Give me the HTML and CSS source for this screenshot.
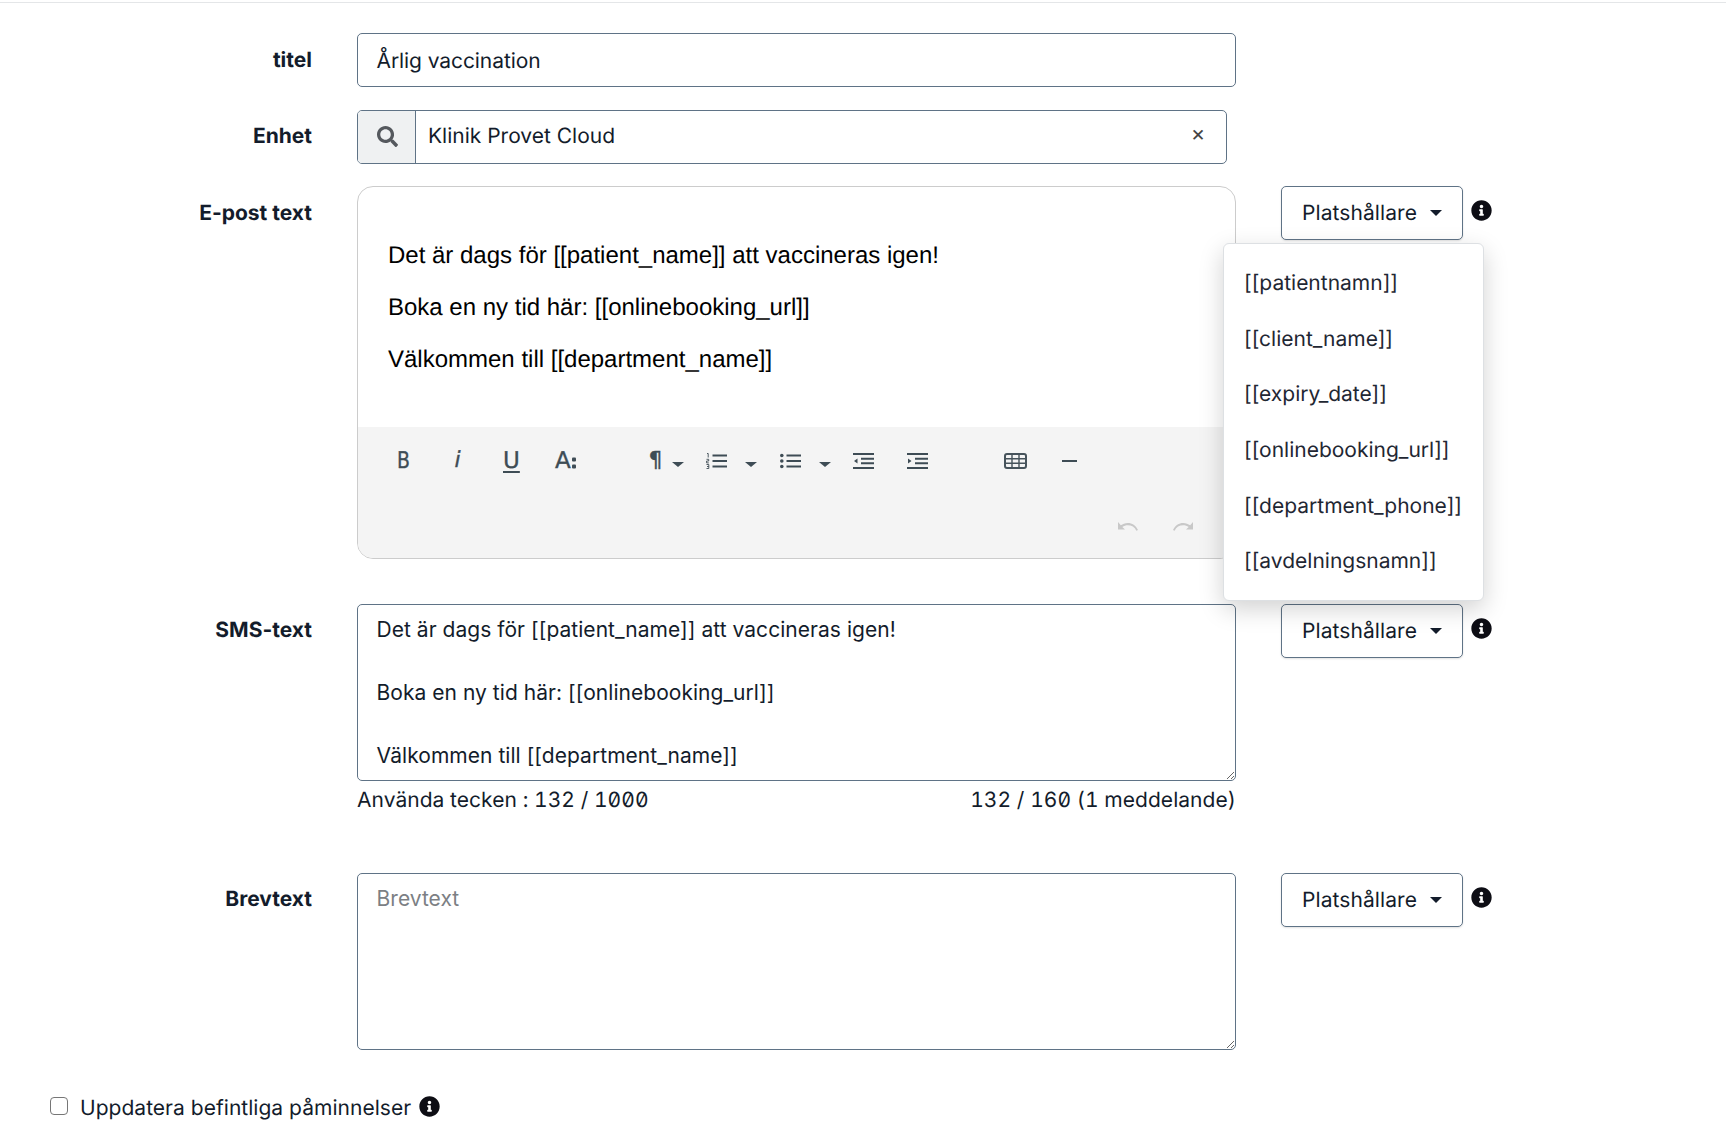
FILE: index.html
```html
<!DOCTYPE html>
<html lang="sv">
<head>
<meta charset="utf-8">
<title>Påminnelse</title>
<link rel="stylesheet" href="styles.css">
</head>
<body>
<svg class="defs" width="0" height="0" aria-hidden="true">
  <symbol id="info" viewBox="0 0 512 512"><path d="M256 8C119.043 8 8 119.083 8 256c0 136.997 111.043 248 248 248s248-111.003 248-248C504 119.083 392.957 8 256 8zm0 110c23.196 0 42 18.804 42 42s-18.804 42-42 42-42-18.804-42-42 18.804-42 42-42zm56 254c0 6.627-5.373 12-12 12h-88c-6.627 0-12-5.373-12-12v-24c0-6.627 5.373-12 12-12h12v-64h-12c-6.627 0-12-5.373-12-12v-24c0-6.627 5.373-12 12-12h64c6.627 0 12 5.373 12 12v100h12c6.627 0 12 5.373 12 12v24z"/></symbol>
  <symbol id="undo" viewBox="0 0 20 9"><path d="M0 0v7.500h7L4.300 5C6 3.900 7.800 3.300 9.800 3.300c3.700 0 6.900 1.800 8.600 5.500L20 8C17.900 3.300 14.100 .9 9.800 .9 7 .9 4.800 1.800 2.800 3.300z"/></symbol>
</svg>
<main class="form">
  <div class="row row-title">
    <label class="label">titel</label>
    <div class="main-col"><div class="control">Årlig vaccination</div></div>
  </div>
  <div class="row row-unit">
    <label class="label">Enhet</label>
    <div class="main-col">
      <div class="select">
        <span class="addon"><svg class="search" viewBox="0 0 512 512"><path d="M505 442.7L405.3 343c-4.500-4.500-10.600-7-17-7H372c27.600-35.300 44-79.700 44-128C416 93.100 322.900 0 208 0S0 93.100 0 208s93.100 208 208 208c48.300 0 92.700-16.400 128-44v16.300c0 6.400 2.500 12.500 7 17l99.700 99.700c9.400 9.400 24.600 9.400 33.900 0l28.300-28.300c9.400-9.400 9.400-24.600.1-34zM208 336c-70.700 0-128-57.200-128-128 0-70.700 57.200-128 128-128 70.700 0 128 57.200 128 128 0 70.700-57.200 128-128 128z"/></svg></span>
        <span class="select-value">Klinik Provet Cloud</span>
        <span class="clear">×</span>
      </div>
    </div>
  </div>
  <div class="row row-email">
    <label class="label">E-post text</label>
    <div class="main-col">
      <div class="editor">
        <div class="editor-body">
          <p>Det är dags för [[patient_name]] att vaccineras igen!</p>
          <p>Boka en ny tid här: [[onlinebooking_url]]</p>
          <p>Välkommen till [[department_name]]</p>
        </div>
        <div class="toolbar">
          <div class="tools">
            <span class="tool t-b"><span class="glyph">B</span></span>
            <span class="tool t-i">i</span>
            <span class="tool t-u">U</span>
            <span class="tool t-a">A<svg class="dots" viewBox="0 0 4 14"><rect x="0" y="1.500" width="4" height="4" rx="1"/><rect x="0" y="8.500" width="4" height="4" rx="1"/></svg></span>
            <span class="tool t-p">¶<i class="mini-caret"></i></span>
            <span class="tool t-ol">
              <svg class="ti" viewBox="0 0 21 16"><path class="s" d="M6.500 2.500H21M6.500 8H21M6.500 13.500H21"/><path class="n" d="M1 .5h1.200v4M.5 6.300h2.200v1.700H.6v1.900h2.200M.5 11.500h2.300v4H.5M1 13.500h1.800"/></svg><i class="mini-caret wide"></i>
            </span>
            <span class="tool t-ul">
              <svg class="ti" viewBox="0 0 21 16"><path class="s" d="M6.500 2.500H21M6.500 8H21M6.500 13.500H21"/><circle cx="1.800" cy="2.500" r="1.800"/><circle cx="1.800" cy="8" r="1.800"/><circle cx="1.800" cy="13.500" r="1.800"/></svg><i class="mini-caret wide"></i>
            </span>
            <span class="tool t-out"><svg class="ti" viewBox="0 0 21 16"><path class="s" d="M0 1h21M8 5.800h13M8 10.200h13M0 15h21"/><path d="M4.500 5.500v5L1 8z"/></svg></span>
            <span class="tool t-in"><svg class="ti" viewBox="0 0 21 16"><path class="s" d="M0 1h21M8 5.800h13M8 10.200h13M0 15h21"/><path d="M1 5.500v5L4.500 8z"/></svg></span>
            <span class="tool t-table"><svg class="table-ic" viewBox="0 0 23 16"><rect class="t" x="1" y="1" width="21" height="14" rx="2"/><path class="g" d="M1 5.700h21M1 10.300h21M8 1v14M15 1v14"/></svg></span>
            <span class="tool t-hr"><svg class="hr" viewBox="0 0 15 2"><rect width="15" height="2"/></svg></span>
          </div>
          <div class="history">
            <svg class="hist"><use href="#undo"/></svg>
            <svg class="hist flip"><use href="#undo"/></svg>
          </div>
        </div>
      </div>
    </div>
    <div class="side">
      <div class="btn"><span class="btn-text">Platshållare</span><i class="caret"></i></div>
      <svg class="info"><use href="#info"/></svg>
      <ul class="menu">
        <li>[[patientnamn]]</li>
        <li>[[client_name]]</li>
        <li>[[expiry_date]]</li>
        <li>[[onlinebooking_url]]</li>
        <li>[[department_phone]]</li>
        <li>[[avdelningsnamn]]</li>
      </ul>
    </div>
  </div>
  <div class="row row-sms">
    <label class="label">SMS-text</label>
    <div class="main-col">
      <textarea class="area" rows="5" readonly>Det är dags för [[patient_name]] att vaccineras igen!

Boka en ny tid här: [[onlinebooking_url]]

Välkommen till [[department_name]]</textarea>
      <div class="counter"><span>Använda tecken : 132 / 1000</span><span>132 / 160 (1 meddelande)</span></div>
    </div>
    <div class="side">
      <div class="btn"><span class="btn-text">Platshållare</span><i class="caret"></i></div>
      <svg class="info"><use href="#info"/></svg>
    </div>
  </div>
  <div class="row row-letter">
    <label class="label">Brevtext</label>
    <div class="main-col">
      <textarea class="area" rows="5" readonly placeholder="Brevtext"></textarea>
    </div>
    <div class="side">
      <div class="btn"><span class="btn-text">Platshållare</span><i class="caret"></i></div>
      <svg class="info"><use href="#info"/></svg>
    </div>
  </div>
  <div class="check-row">
    <span class="check"></span>
    <span class="check-label">Uppdatera befintliga påminnelser</span>
    <svg class="info small"><use href="#info"/></svg>
  </div>
</main>
</body>
</html>
```
FILE: styles.css
```css
* { box-sizing: border-box; }
html, body { margin: 0; padding: 0; background: #fff; }
body {
  font-family: Inter, "Liberation Sans", sans-serif;
  font-size: 21px;
  line-height: 31.5px;
  color: #131c2b;
  height: 1144px;
  overflow: hidden;
  text-rendering: geometricPrecision;
}
.defs { position: absolute; }
.form { border-top: 1px solid #e4e6e8; margin-top: 2px; padding-top: 30px; }
.row {
  display: grid;
  grid-template-columns: 312px 879px auto;
  column-gap: 45px;
  align-items: start;
}
.row-unit { margin-top: 23px; }
.row-email { margin-top: 22px; }
.row-sms { margin-top: 45px; }
.row-letter { margin-top: 0; }
.label {
  font-weight: 700;
  text-align: right;
  padding-top: 11px;
  color: #131c2b;
}
.row-title .label, .row-email .label { padding-top: 12px; }
.main-col { min-width: 0; }
.control {
  height: 54px;
  border: 1px solid #5f7386;
  border-radius: 5px;
  padding: 12px 18.5px;
  letter-spacing: -.08px;
}
.select {
  display: flex;
  align-items: center;
  width: 870px;
  height: 54px;
  border: 1px solid #5f7386;
  border-radius: 5px;
  overflow: hidden;
}
.addon {
  display: flex;
  align-items: center;
  justify-content: center;
  width: 58px;
  height: 100%;
  flex: none;
  background: #eff1f2;
  border-right: 1px solid #5f7386;
  padding: 0 0 2px 2px;
}
.search { width: 21px; height: 21px; fill: #55595e; }
.select-value { flex: 1; padding-left: 12px; }
.clear { width: 60px; text-align: center; color: #444; font-size: 22px; padding: 0 0 5px 4px; }
.editor {
  height: 373px;
  border: 1px solid #cccccc;
  border-radius: 16px;
  overflow: hidden;
  display: flex;
  flex-direction: column;
}
.editor-body {
  height: 240px;
  padding: 53px 30px 0;
  font-family: "Liberation Sans", Arial, sans-serif;
  font-size: 24px;
  line-height: 32px;
  color: #000;
}
.editor-body p { margin: 0 0 20px; }
.toolbar {
  flex: 1;
  background: #f4f4f4;
  padding: 19px 0 0 39px;
  display: flex;
  flex-direction: column;
  color: #3e4c55;
}
.tools { display: flex; align-items: center; height: 30px; }
.tool {
  display: inline-flex;
  align-items: center;
  font-family: "DejaVu Sans", sans-serif;
  font-size: 23px;
  color: #3e4c55;
  line-height: 1;
  flex: none;
  -webkit-text-stroke: .35px #3e4c55;
}
.glyph { display: inline-block; transform: scaleX(.82); transform-origin: left center; }
.t-b { width: 57.5px; }
.t-i { width: 48.5px; font-style: italic; font-size: 22px; }
.t-u { width: 52px; text-decoration: underline; text-underline-offset: 3px; text-decoration-thickness: 2px; }
.t-a { width: 93.5px; }
.dots { width: 4px; height: 14px; fill: #3e4c55; margin-left: 1px; margin-top: 3px; }
.t-p { width: 57px; font-size: 22px; }
.t-ol { width: 74.5px; }
.t-ul { width: 72.5px; }
.t-out { width: 54px; }
.t-in { width: 97.5px; }
.t-table { width: 58px; }
.ti { width: 21px; height: 16px; fill: #3e4c55; display: block; flex: none; }
.table-ic { width: 23px; height: 16px; display: block; }
.s { fill: none; stroke: #3e4c55; stroke-width: 2; }
.n { fill: none; stroke: #3e4c55; stroke-width: .9; }
.t { fill: none; stroke: #46535b; stroke-width: 2; }
.g { fill: none; stroke: #46535b; stroke-width: 1.400; }
.hr { width: 15px; height: 2px; fill: #3e4c55; display: block; }
.mini-caret {
  display: inline-block;
  width: 0; height: 0;
  margin-left: 9px;
  margin-top: 6px;
  border-left: 6px solid transparent;
  border-right: 6px solid transparent;
  border-top: 5px solid #3e4c55;
}
.mini-caret.wide { margin-left: 18px; margin-top: 6px; }
.history {
  display: flex;
  justify-content: flex-end;
  gap: 35px;
  margin-top: 46px;
  padding-right: 42px;
}
.hist { width: 20px; height: 9px; fill: #c8c8c8; }
.flip { transform: scaleX(-1); }
.side { position: relative; display: flex; align-items: flex-start; }
.btn {
  height: 54px;
  width: 182px;
  display: flex;
  align-items: center;
  justify-content: center;
  border: 1px solid #5f7386;
  border-radius: 5px;
  background: #fff;
  box-shadow: 0 1px 2px rgba(0,0,0,.12);
}
.btn-text { padding-top: 2px; letter-spacing: .08px; }
.caret {
  display: inline-block;
  margin-left: 13px;
  width: 0; height: 0;
  border-left: 6px solid transparent;
  border-right: 6px solid transparent;
  border-top: 6px solid #131c2b;
}
.info { width: 21px; height: 21px; margin: 14px 0 0 8px; fill: #0d0d14; flex: none; }
.menu {
  position: absolute;
  left: -58px;
  top: 57px;
  z-index: 5;
  width: 261px;
  height: 358px;
  margin: 0;
  padding: 24px 0 0 20px;
  list-style: none;
  background: #fff;
  border: 1px solid #dde0e3;
  border-radius: 6px;
  box-shadow: 0 8px 24px rgba(0,0,0,.18);
  white-space: nowrap;
  color: #1f2733;
}
.menu li { height: 55.7px; }
.area {
  display: block;
  width: 879px;
  height: 177px;
  border: 1px solid #5f7386;
  border-radius: 5px;
  padding: 9px 18.5px;
  font: inherit;
  line-height: 31.5px;
  letter-spacing: .04px;
  color: #131c2b;
  background: #fff;
  overflow: hidden;
  outline: none;
}
.area::placeholder { color: #7c7f84; opacity: 1; }
.counter {
  display: flex;
  justify-content: space-between;
  margin-top: 4px;
  height: 88px;
  letter-spacing: .04px;
  font-variant-numeric: tabular-nums slashed-zero;
  font-feature-settings: "tnum", "zero";
}
.check-row {
  display: flex;
  align-items: center;
  margin-top: 37px;
  padding-left: 50px;
}
.check {
  width: 18px; height: 18px;
  border: 1px solid #767676;
  border-radius: 4px;
  background: #fff;
  flex: none;
}
.check-label { margin-left: 12px; padding-top: 6px; letter-spacing: .03px; }
.info.small { margin: 1px 0 0 8px; }
```
